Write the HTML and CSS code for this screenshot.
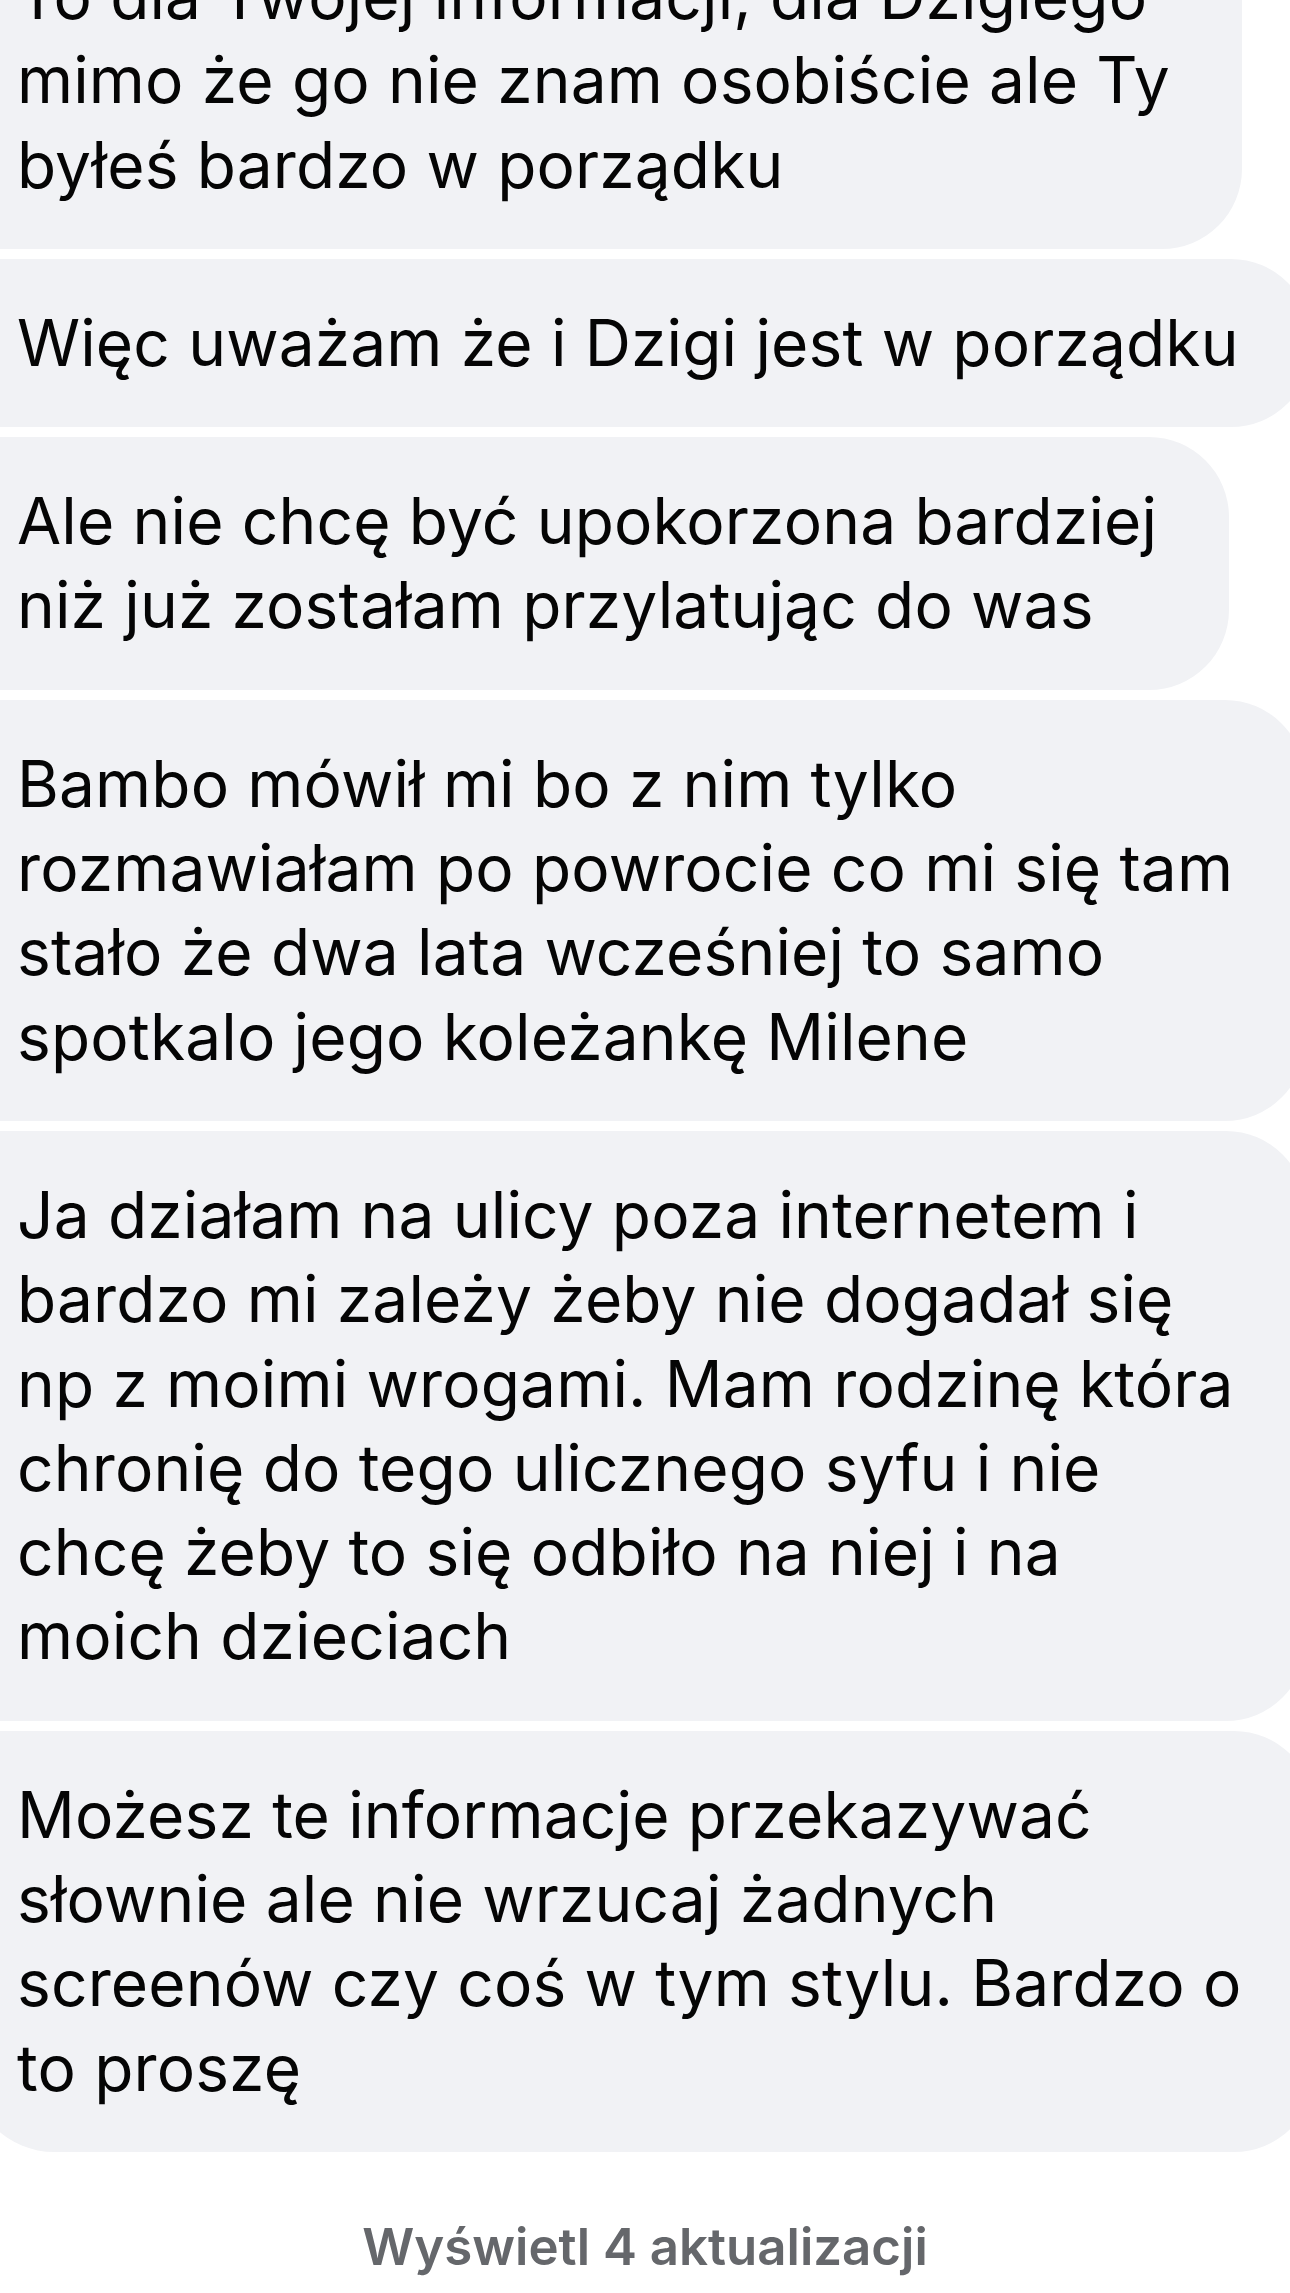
FILE: index.html
```html
<!DOCTYPE html>
<html lang="pl">
<head>
<meta charset="utf-8">
<title>Wiadomości</title>
<link rel="stylesheet" href="styles.css">
</head>
<body>
<div class="screen">
  <div class="thread">
    <div class="bubble b-first">To dla Twojej informacji, dla Dzigiego<br>mimo że go nie znam osobiście ale Ty<br>byłeś bardzo w porządku</div>
    <div class="bubble">Więc uważam że i Dzigi jest w porządku</div>
    <div class="bubble">Ale nie chcę być upokorzona bardziej<br>niż już zostałam przylatując do was</div>
    <div class="bubble">Bambo mówił mi bo z nim tylko<br>rozmawiałam po powrocie co mi się tam<br>stało że dwa lata wcześniej to samo<br>spotkalo jego koleżankę Milene</div>
    <div class="bubble">Ja działam na ulicy poza internetem i<br>bardzo mi zależy żeby nie dogadał się<br>np z moimi wrogami. Mam rodzinę która<br>chronię do tego ulicznego syfu i nie<br>chcę żeby to się odbiło na niej i na<br>moich dzieciach</div>
    <div class="bubble b-last">Możesz te informacje przekazywać<br>słownie ale nie wrzucaj żadnych<br>screenów czy coś w tym stylu. Bardzo o<br>to proszę</div>
  </div>
  <div class="more">Wyświetl 4 aktualizacji</div>
</div>
</body>
</html>
```
FILE: styles.css
```css
html, body {
  margin: 0;
  padding: 0;
  background: #ffffff;
}
body {
  width: 1290px;
  height: 2293px;
  overflow: hidden;
  font-family: Inter, "Noto Sans", "Liberation Sans", sans-serif;
  color: #050505;
}
.screen {
  width: 1290px;
  height: 2293px;
  overflow: hidden;
}
.thread {
  display: flex;
  flex-direction: column;
  align-items: flex-start;
  gap: 10px;
  margin-top: -88px;
  margin-left: -30px;
}
.bubble {
  background: #f1f2f5;
  padding: 42px 72px 42px 47px;
  font-size: 64px;
  letter-spacing: 0.15px;
  line-height: 84.3px;
  white-space: nowrap;
  border-radius: 80px 80px 80px 14px;
  border-top-left-radius: 14px;
  border-bottom-left-radius: 14px;
}
.b-last {
  border-bottom-left-radius: 84px;
}
.more {
  margin-top: 64px;
  text-align: center;
  font-size: 51px;
  font-weight: 600;
  color: #65676b;
  line-height: 62px;
}
```
